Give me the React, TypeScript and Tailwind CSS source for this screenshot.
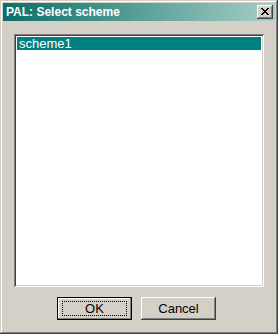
import React from "react";

export default function App() {
  const font = { fontFamily: '"Liberation Sans", Arial, sans-serif' };
  return (
    <div
      className="w-[278px] h-[334px] bg-[#d4d0c8] p-[3px] flex flex-col shadow-[inset_-1px_-1px_0_#404040,inset_1px_1px_0_#d4d0c8,inset_-2px_-2px_0_#808080,inset_2px_2px_0_#ffffff]"
      style={font}
    >
      <div className="h-[18px] flex items-center justify-between pl-[3px] pr-[2px] bg-[linear-gradient(to_right,#0a6f69,#a6cfc6)]">
        <span className="text-white font-bold text-[12px] leading-none">
          PAL: Select scheme
        </span>
        <div className="w-[16px] h-[14px] bg-[#d4d0c8] flex items-center justify-center shadow-[inset_-1px_-1px_0_#404040,inset_1px_1px_0_#ffffff,inset_-2px_-2px_0_#808080]">
          <svg width="8" height="7" viewBox="0 0 8 7" className="mb-[1px]">
            <path
              d="M0 0h2v1h-2zM6 0h2v1h-2zM1 1h2v1h-2zM5 1h2v1h-2zM2 2h4v1h-4zM3 3h2v1h-2zM2 4h4v1h-4zM1 5h2v1h-2zM5 5h2v1h-2zM0 6h2v1h-2zM6 6h2v1h-2z"
              fill="#000"
            />
          </svg>
        </div>
      </div>
      <div className="ml-[11px] mt-[13px] w-[250px] h-[253px] bg-white p-[2px] shadow-[inset_1px_1px_0_#808080,inset_-1px_-1px_0_#ffffff,inset_2px_2px_0_#404040,inset_-2px_-2px_0_#d4d0c8]">
        <div className="mx-[1px] mt-[1px] h-[13px] bg-[#008080] text-white text-[13px] leading-[13px] pl-[2px]">
          scheme1
        </div>
      </div>
      <div className="mt-[10px] flex pl-[54px] gap-[9px]">
        <div className="w-[75px] h-[23px] p-[1px] bg-black">
          <div className="w-full h-full bg-[#d4d0c8] flex items-center justify-center shadow-[inset_-1px_-1px_0_#808080,inset_1px_1px_0_#ffffff]">
            <div className="w-[65px] h-[15px] border border-dotted border-black flex items-center justify-center text-[13px] text-black">
              OK
            </div>
          </div>
        </div>
        <div className="w-[75px] h-[23px] bg-[#d4d0c8] flex items-center justify-center text-[13px] text-black shadow-[inset_-1px_-1px_0_#404040,inset_1px_1px_0_#ffffff,inset_-2px_-2px_0_#808080]">
          Cancel
        </div>
      </div>
    </div>
  );
}
